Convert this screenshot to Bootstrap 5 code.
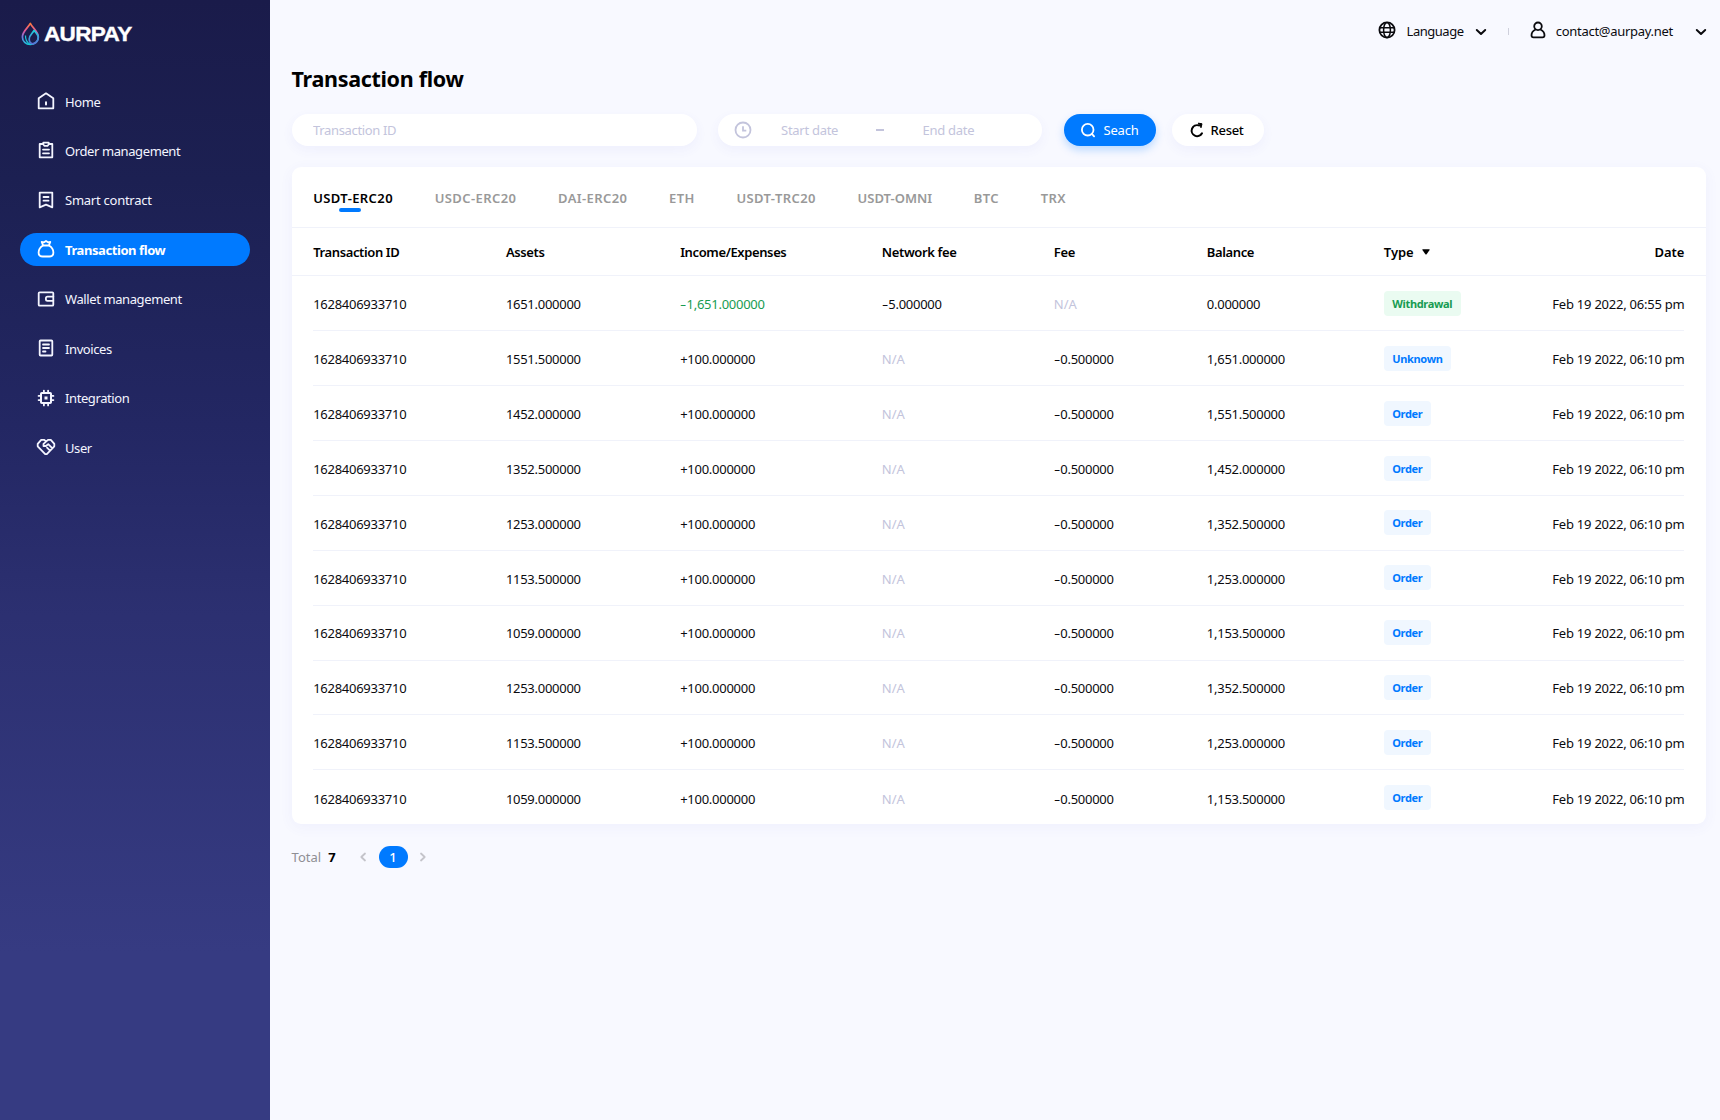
<!DOCTYPE html>
<html lang="en">
<head>
<meta charset="utf-8">
<meta name="viewport" content="width=device-width, initial-scale=1">
<title>Aurpay – Transaction flow</title>
<link href="https://cdn.jsdelivr.net/npm/bootstrap@5.3.0/dist/css/bootstrap.min.css" rel="stylesheet">
<style>
  :root { --ink:#0b0b0f; --blue:#007aff; --line:#f0f2fa; --faint:#c3c4dc; }
  body { background:#f8f9ff; color:var(--ink); font-family:"Noto Sans",sans-serif; font-size:13px; line-height:20px; height:1120px; overflow:hidden; }
  svg { flex:none; display:block; }
  .side { width:270px; background:linear-gradient(180deg,#1a1b4a 0%,#1c2052 16%,#232763 38%,#2c3071 55%,#363b82 85%,#363b82 100%); padding:20px 20px 0; }
  .brand { height:28px; padding-left:1px; color:#fff; font:bold 20.5px/28px "Liberation Sans",sans-serif; letter-spacing:-.6px; -webkit-text-stroke:.4px #fff; }
  .brand-name { transform:scaleX(1.1); transform-origin:left; }
  .menu { margin-top:36.9px; gap:17px; }
  .menu .nav-link { height:32.45px; padding:1px 16px 0; color:#f4f5ff; border-radius:17px; gap:9px; --bs-nav-link-font-size:13px; letter-spacing:-.4px; }
  .menu .nav-link.active { background:var(--blue); color:#fff; font-weight:700; letter-spacing:-.42px; }
  .menu svg { width:20px; height:20px; position:relative; top:-.6px; }
  .ico { fill:none; stroke:currentColor; stroke-width:1.8; stroke-linejoin:round; stroke-linecap:round; }
  main { padding:0 14px 0 21.6px; }
  .topbar { height:62px; margin-right:-1px; }
  .topbar svg { position:relative; top:-1px; }
  .topbar .chev { top:1px; }
  .lang { letter-spacing:-.48px; margin:0 11.3px 0 10.4px; }
  .mail { letter-spacing:-.29px; margin:0 22px 0 9.6px; }
  .split { width:1px; height:7px; background:#cfd0dc; margin:0 21px 0 21.4px; }
  .page-title { font-size:21.5px; line-height:32px; font-weight:700; letter-spacing:-.32px; color:#000; margin:0; padding-top:.5px; height:51.5px; }
  .pill { height:32.6px; border-radius:17px; background:#fff; box-shadow:0 4px 12px rgba(90,80,220,.06); color:var(--faint); letter-spacing:-.35px; }
  .id-box { width:405px; padding:1px 21.5px 0; font-size:13px; border:0; }
  .id-box::placeholder { color:var(--faint); }
  .range { width:324px; margin-left:21.6px; padding:0 0 0 15.5px; }
  .range span { position:relative; top:.5px; letter-spacing:-.28px; }
  .range .dash { width:8px; height:2px; top:0; background:var(--faint); margin:0 39px 0 37.4px; }
  .range svg { margin-right:29.4px; }
  .btn-go, .btn-clear { border:0; font-size:13px; padding:0; height:32.6px; width:92px; border-radius:17px; gap:7px; }
  .btn span { position:relative; top:1px; }
  .btn-go { background:var(--blue); color:#fff; margin-left:21.4px; letter-spacing:-.15px; box-shadow:0 4px 9px rgba(0,122,255,.25); }
  .btn-clear { background:#fff; color:#000; margin-left:16px; padding-right:2px; font-weight:500; letter-spacing:-.3px; box-shadow:0 4px 12px rgba(90,80,220,.06); }
  .panel { margin-top:21.4px; background:#fff; border-radius:9px; box-shadow:0 3px 14px rgba(90,80,220,.06); height:657px; }
  .coins { height:60.6px; border-bottom:1px solid var(--line); padding:0 21.6px; gap:41.7px; letter-spacing:.4px; }
  .coins a { color:#999; font-weight:600; text-decoration:none; position:relative; top:.3px; }
  .coins a.active { color:#000; }
  .coins a.active::after { content:""; position:absolute; left:50%; margin-left:-14px; bottom:-4.5px; width:22px; height:3.6px; border-radius:2px; background:var(--blue); }
  .coins a.tight { letter-spacing:.02px; }
  .line { display:grid; grid-template-columns:192.7px 174.3px 201.7px 172px 153px 177px 1fr; align-items:center; }
  .heads { height:48.1px; padding:0 21.6px; font-weight:600; color:#000; border-bottom:1px solid var(--line); letter-spacing:-.38px; }
  .heads > span:last-child { letter-spacing:-.05px; }
  .entry { height:54.92px; margin:0 21.6px; border-bottom:1px solid var(--line); letter-spacing:-.27px; }
  .entry:last-child { border-bottom:0; }
  .heads > span { position:relative; top:.5px; }
  .entry > span { position:relative; top:.85px; }
  .entry > span:last-child { letter-spacing:-.24px; }
  .neg { display:inline-block; width:6.4px; transform:scaleX(1.5); transform-origin:left; }
  .entry > .none { color:var(--faint); letter-spacing:0; }
  .gain { color:#189c52; }
  .tag { display:inline-block; height:25px; line-height:25px; padding:0 8.6px 0 8.3px; border-radius:4px; font-size:11px; font-weight:700; letter-spacing:-.32px; background:#f0f7ff; color:var(--blue); position:relative; top:-.7px; }
  .tag.out { background:#eafbf1; color:#189c52; }
  .pager { margin-top:21.4px; height:22px; color:#8f8f94; }
  .pager b { margin-left:7px; }
  .pager .page-now { width:29px; height:22px; border-radius:11px; background:var(--blue); color:#fff; text-align:center; line-height:22px; margin:0 11px; font-weight:500; }
  .pager svg { color:#c4c4ca; }
</style>
</head>
<body class="d-flex">
<aside class="side d-flex flex-column flex-shrink-0 h-100">
  <div class="brand d-flex align-items-center">
    <svg width="19" height="24" viewBox="0 0 19 24" fill="none" stroke-width="1.7" stroke-linejoin="round">
      <defs>
        <linearGradient id="drop" x1="0" y1="0" x2="0" y2="1"><stop offset="0" stop-color="#ff7a3c"/><stop offset=".35" stop-color="#e2569c"/><stop offset=".65" stop-color="#6f7be0"/><stop offset="1" stop-color="#19c6d8"/></linearGradient>
        <linearGradient id="drip" x1="0" y1="0" x2="0" y2="1"><stop offset="0" stop-color="#1ed0dc"/><stop offset="1" stop-color="#5b6fd6"/></linearGradient>
      </defs>
      <path d="M9.300 1.400C7.200 5.600 1.400 9.400 1.400 14.900C1.400 19.300 5 22.500 9.300 22.500C13.900 22.500 17.300 19.200 17.300 14.900C17.300 9.500 11.500 5.800 9.300 1.400Z" stroke="url(#drop)"/>
      <path d="M13.100 8.500C11.500 11.400 8.200 13.300 8.200 17C8.200 19.500 9.800 21.500 11.600 21.800C15 21 17.300 18.500 17.300 15.200C17.300 12.500 15 11 13.100 8.500Z" stroke="url(#drip)"/>
      <path d="M4.500 13.500C4.300 17.500 6 20.500 9 22.300" stroke="#19c6d8" stroke-width="1.200"/>
    </svg>
    <span class="brand-name ms-1">AURPAY</span>
  </div>
  <nav class="menu nav flex-column flex-nowrap">
    <a class="nav-link d-flex align-items-center" href="#"><svg class="ico" viewBox="0 0 20 20"><path d="M2.700 7.200L10 2.300l7.300 4.900V17.300H2.700Z"/><path d="M10 11.300v2.300" stroke-width="2"/></svg>Home</a>
    <a class="nav-link d-flex align-items-center" href="#"><svg class="ico" viewBox="0 0 20 20"><path d="M6.500 4H3.700V17.300H16.300V4H13.500"/><path d="M7.300 2.600h5.400v1.900l-1.200 1.300H8.500L7.300 4.500Z"/><path d="M7 9.600h6M7 13.300h6"/></svg>Order management</a>
    <a class="nav-link d-flex align-items-center" href="#"><svg class="ico" viewBox="0 0 20 20"><path d="M3.700 2.600H16.300V17.300L10 14.600L3.700 17.300Z"/><path d="M7.500 7h5M7.500 10.700h5"/></svg><span style="letter-spacing:-.25px">Smart contract</span></a>
    <a class="nav-link active d-flex align-items-center" href="#"><svg class="ico" viewBox="0 0 20 20"><path d="M7 6.500C4 8.300 2.600 10.800 2.600 13.500c0 2.700 1.400 4 4 4h6.800c2.600 0 4-1.300 4-4c0-2.700-1.400-5.200-4.400-7Z"/><path d="M7 6.300L5.700 2.900L8 3.300L10 2L12 3.300L14.300 2.900L13 6.300"/></svg>Transaction flow</a>
    <a class="nav-link d-flex align-items-center" href="#"><svg class="ico" viewBox="0 0 20 20"><rect x="2.700" y="3.300" width="14.600" height="13.400" rx="1"/><path d="M17.300 7.600H11.500a1.600 1.600 0 0 0-1.600 1.600v1a1.600 1.600 0 0 0 1.600 1.600H17.300"/></svg>Wallet management</a>
    <a class="nav-link d-flex align-items-center" href="#"><svg class="ico" viewBox="0 0 20 20"><rect x="3.700" y="2.500" width="12.600" height="15" rx=".8"/><path d="M7 6.500h6M7 10h6M7 13.500h2.500"/></svg>Invoices</a>
    <a class="nav-link d-flex align-items-center" href="#"><svg class="ico" viewBox="0 0 20 20"><rect x="5" y="5" width="10" height="10" rx=".8" stroke-width="2"/><rect x="8.500" y="8.500" width="3" height="3" fill="currentColor" stroke="none"/><path d="M7.900 4.500V2.600M12.100 4.500V2.600M7.900 17.400v-1.900M12.100 17.400v-1.900M4.500 7.900H2.600M4.500 12.100H2.600M17.400 7.900h-1.900M17.400 12.100h-1.900"/></svg>Integration</a>
    <a class="nav-link d-flex align-items-center" href="#"><svg class="ico" viewBox="0 0 20 20"><path d="M10 4.200L8 2.800H5.200L1.700 6.900V9.300L9.200 17.100h1.600L18.300 9.300V6.900L14.800 2.800H12L7.500 6.900V9h2.400L12.200 7.200L16.200 11.200M11 10.600l2.800 2.800"/></svg>User</a>
  </nav>
</aside>
<main class="flex-grow-1">
  <header class="topbar d-flex align-items-center justify-content-end">
    <svg class="ico" width="18" height="18" viewBox="0 0 18 18"><circle cx="9" cy="9" r="7.600"/><ellipse cx="9" cy="9" rx="3.400" ry="7.600" stroke-width="1.500"/><path d="M1.700 6.700h14.600M1.700 11.300h14.600" stroke-width="1.400"/></svg>
    <span class="lang">Language</span>
    <svg class="ico chev" width="12" height="12" viewBox="0 0 12 12"><path d="M1.800 4L6 7.900L10.200 4" stroke-width="2"/></svg>
    <span class="split"></span>
    <svg class="ico" width="16" height="18" viewBox="0 0 16 18"><circle cx="8" cy="5.300" r="3.800"/><path d="M5.600 8.500C3 9.700 1.500 12 1.500 14.300c0 1.500.7 2.100 2 2.100h9c1.300 0 2-.6 2-2.100c0-2.300-1.500-4.600-4.100-5.800"/></svg>
    <span class="mail">contact@aurpay.net</span>
    <svg class="ico chev" width="12" height="12" viewBox="0 0 12 12"><path d="M1.800 4L6 7.900L10.200 4" stroke-width="2"/></svg>
  </header>
  <h1 class="page-title">Transaction flow</h1>
  <form class="d-flex">
    <input class="id-box pill" placeholder="Transaction ID">
    <div class="range pill d-flex align-items-center"><svg class="ico" width="18" height="18" viewBox="0 0 18 18"><circle cx="9" cy="9" r="7.500"/><path d="M9 5.200V9.700h3.300" stroke-linecap="butt" stroke-linejoin="miter"/></svg><span>Start date</span><span class="dash"></span><span>End date</span></div>
    <button type="button" class="btn btn-go d-flex align-items-center justify-content-center"><svg class="ico" width="16" height="16" viewBox="0 0 16 16"><circle cx="7.700" cy="7.700" r="5.800"/><path d="M11.900 11.900l2.200 2.500"/></svg><span>Seach</span></button>
    <button type="button" class="btn btn-clear d-flex align-items-center justify-content-center"><svg class="ico" width="14" height="16" viewBox="0 0 14 16"><path d="M12 11.300A5.500 5.500 0 1 1 8.800 3.400" stroke-width="2"/><path d="M8.600 1.200l3.400.6l-.9 3.600Z" fill="currentColor" stroke-width="1"/></svg><span>Reset</span></button>
  </form>
  <section class="panel">
    <nav class="coins d-flex align-items-center"><a class="active" href="#">USDT-ERC20</a><a href="#">USDC-ERC20</a><a href="#">DAI-ERC20</a><a href="#">ETH</a><a href="#">USDT-TRC20</a><a class="tight" href="#">USDT-OMNI</a><a href="#">BTC</a><a href="#">TRX</a></nav>
    <div class="line heads"><span>Transaction ID</span><span>Assets</span><span>Income/Expenses</span><span>Network fee</span><span>Fee</span><span>Balance</span><span class="d-flex align-items-center">Type<svg class="ms-2" width="8" height="6" viewBox="0 0 8 6"><path d="M.8.300H7.200Q8 .4 7.600 1.100L4.600 5.200Q4 5.900 3.400 5.200L.4 1.100Q0 .4.8.300Z"/></svg><span class="ms-auto">Date</span></span></div>
    <div id="entries"></div>
  </section>
  <footer class="pager d-flex align-items-center"><span>Total</span><b class="text-black">7</b>
    <svg class="ico ms-4" width="8" height="12" viewBox="3 0 8 12"><path d="M8 2.500L4.300 6L8 9.500"/></svg>
    <span class="page-now">1</span>
    <svg class="ico" width="8" height="12" viewBox="0 0 8 12"><path d="M2 2.500L5.700 6L2 9.500"/></svg></footer>
</main>
<script src="https://cdn.jsdelivr.net/npm/bootstrap@5.3.0/dist/js/bootstrap.bundle.min.js"></script>
<script>
  const rows = [
    ['1651.000000','-1,651.000000','-5.000000','N/A','0.000000','Withdrawal','06:55'],
    ['1551.500000','+100.000000','N/A','-0.500000','1,651.000000','Unknown','06:10'],
    ['1452.000000','+100.000000','N/A','-0.500000','1,551.500000','Order','06:10'],
    ['1352.500000','+100.000000','N/A','-0.500000','1,452.000000','Order','06:10'],
    ['1253.000000','+100.000000','N/A','-0.500000','1,352.500000','Order','06:10'],
    ['1153.500000','+100.000000','N/A','-0.500000','1,253.000000','Order','06:10'],
    ['1059.000000','+100.000000','N/A','-0.500000','1,153.500000','Order','06:10'],
    ['1253.000000','+100.000000','N/A','-0.500000','1,352.500000','Order','06:10'],
    ['1153.500000','+100.000000','N/A','-0.500000','1,253.000000','Order','06:10'],
    ['1059.000000','+100.000000','N/A','-0.500000','1,153.500000','Order','06:10']
  ];
  const cell = v => `<span class="${v === 'N/A' ? 'none' : v.startsWith('-1,') ? 'gain' : ''}">${v.replace('-', '<span class="neg">-</span>')}</span>`;
  document.getElementById('entries').innerHTML = rows.map(r =>
    `<div class="line entry"><span>1628406933710</span>${r.slice(0, 5).map(cell).join('')}` +
    `<span class="d-flex align-items-center"><span class="tag ${r[5] === 'Withdrawal' ? 'out' : ''}">${r[5]}</span><span class="ms-auto">Feb 19 2022, ${r[6]} pm</span></span></div>`).join('');
</script>
</body>
</html>
